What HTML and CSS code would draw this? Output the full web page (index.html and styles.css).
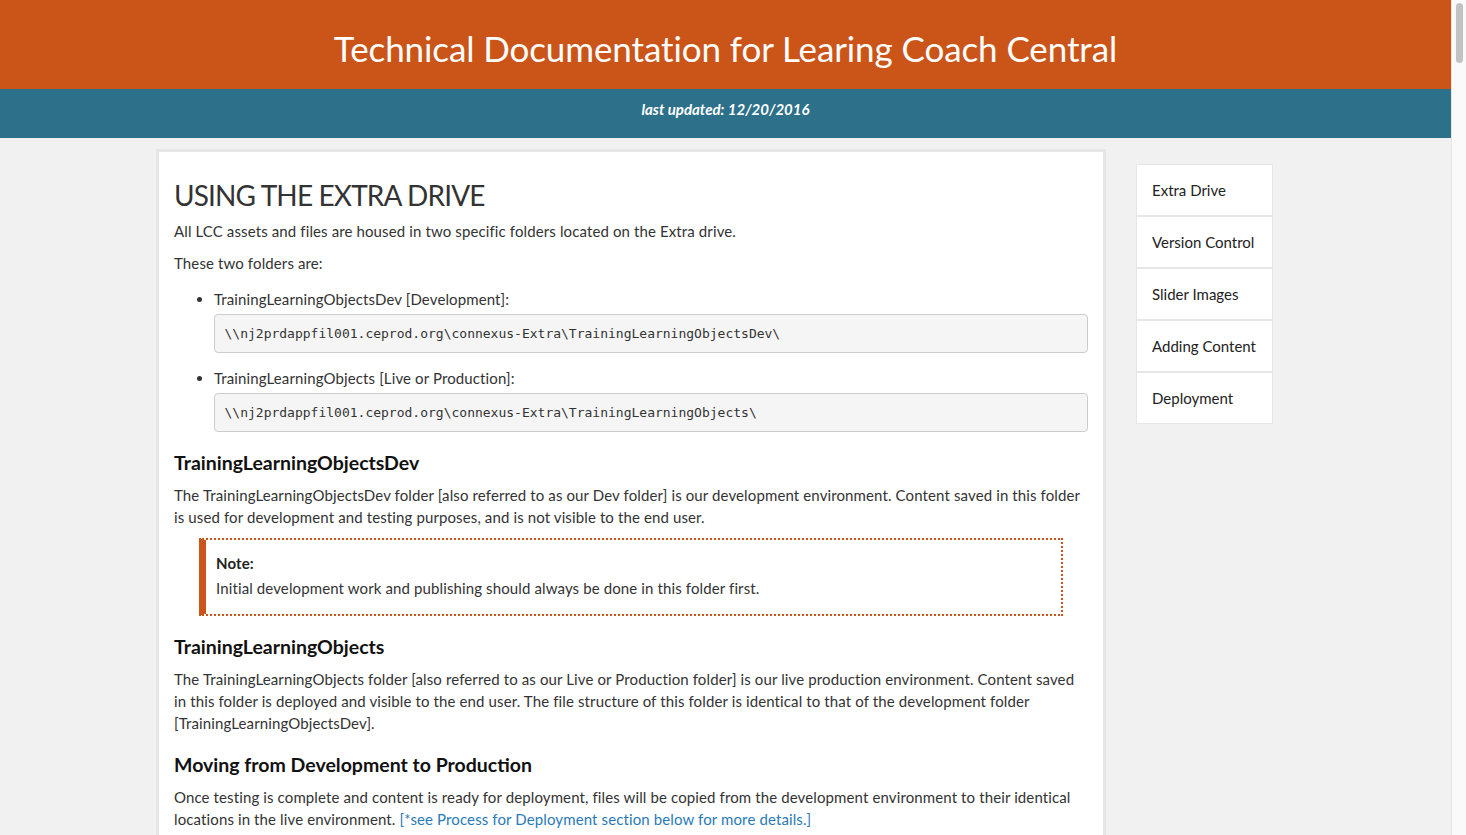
FILE: index.html
```html
<!DOCTYPE html>
<html lang="en">
<head>
<meta charset="utf-8">
<title>Technical Documentation for Learing Coach Central</title>
<link rel="stylesheet" href="styles.css">
</head>
<body>
<header class="site-header">
  <h1 class="site-title">Technical Documentation for Learing Coach Central</h1>
</header>
<div class="updated-bar">
  <p class="updated">last updated: 12/20/2016</p>
</div>
<div class="layout">
  <main class="card">
    <h1 class="section-title">USING THE EXTRA DRIVE</h1>
    <p>All LCC assets and files are housed in two specific folders located on the Extra drive.</p>
    <p>These two folders are:</p>
    <ul class="folders">
      <li>
        <div class="folder-label">TrainingLearningObjectsDev [Development]:</div>
        <pre class="path">\\nj2prdappfil001.ceprod.org\connexus-Extra\TrainingLearningObjectsDev\</pre>
      </li>
      <li>
        <div class="folder-label">TrainingLearningObjects [Live or Production]:</div>
        <pre class="path">\\nj2prdappfil001.ceprod.org\connexus-Extra\TrainingLearningObjects\</pre>
      </li>
    </ul>
    <h3>TrainingLearningObjectsDev</h3>
    <p>The TrainingLearningObjectsDev folder [also referred to as our Dev folder] is our development environment. Content saved in this folder is used for development and testing purposes, and is not visible to the end user.</p>
    <div class="note">
      <div class="note-title">Note:</div>
      <div class="note-text">Initial development work and publishing should always be done in this folder first.</div>
    </div>
    <h3>TrainingLearningObjects</h3>
    <p>The TrainingLearningObjects folder [also referred to as our Live or Production folder] is our live production environment. Content saved in this folder is deployed and visible to the end user. The file structure of this folder is identical to that of the development folder [TrainingLearningObjectsDev].</p>
    <h3>Moving from Development to Production</h3>
    <p>Once testing is complete and content is ready for deployment, files will be copied from the development environment to their identical locations in the live environment. <a class="ref" href="#deployment">[*see Process for Deployment section below for more details.]</a></p>
    <h3>Version Control</h3>
    <p>All LCC content is kept under version control so that changes can be tracked and reverted when necessary.</p>
    <p>Please make sure every change is committed with a short description of what was updated.</p>
  </main>
  <nav class="side-nav">
    <a class="nav-item" href="#extra">Extra Drive</a>
    <a class="nav-item" href="#version">Version Control</a>
    <a class="nav-item" href="#slider">Slider Images</a>
    <a class="nav-item" href="#adding">Adding Content</a>
    <a class="nav-item" href="#deployment">Deployment</a>
  </nav>
</div>
<div class="scrollbar" aria-hidden="true"><div class="scrollbar-thumb"></div></div>
</body>
</html>
```
FILE: styles.css
```css
html, body {
  margin: 0;
  padding: 0;
}
body {
  background: #f1f1f1;
  font-family: Lato, "Noto Sans", sans-serif;
  font-size: 15px;
  line-height: 22px;
  letter-spacing: 0.12px;
  color: #333;
  padding-right: 15px;
}
.scrollbar {
  position: fixed;
  top: 0;
  right: 0;
  bottom: 0;
  width: 14px;
  background: #fafafa;
  border-left: 1px solid #e6e6e6;
}
.scrollbar-thumb {
  margin: 3px 3px 0 4px;
  height: 60px;
  background: #c2c2c2;
  border-radius: 4px;
}
.site-header {
  background: #cb5519;
  height: 89px;
  box-sizing: border-box;
  padding-top: 6px;
  display: flex;
  align-items: center;
  justify-content: center;
}
.site-title {
  margin: 0;
  color: #fff;
  font-weight: 400;
  font-size: 35px;
  line-height: 40px;
  letter-spacing: -0.1px;
}
.updated-bar {
  background: #2c7089;
  height: 49px;
  box-sizing: border-box;
  padding-bottom: 10px;
  display: flex;
  align-items: center;
  justify-content: center;
}
.updated {
  margin: 0;
  color: #fff;
  font-style: italic;
  font-weight: 700;
  font-size: 15px;
  letter-spacing: 0;
}
.layout {
  display: flex;
  align-items: flex-start;
  padding-left: 156px;
  padding-top: 11px;
  gap: 30px;
}
.card {
  width: 914px;
  background: #fff;
  border: 3px solid #e6e6e6;
  padding: 0 15px 20px;
}
.section-title {
  margin: 25px 0 7px;
  font-size: 28px;
  line-height: 36px;
  font-weight: 400;
  letter-spacing: -0.85px;
  color: #333;
}
p {
  margin: 0 0 10px;
}
.folders {
  margin: 14px 0 0;
  padding-left: 40px;
}
.folder-label {
  margin-bottom: 4px;
}
.path {
  margin: 0 0 14px;
  padding: 9.5px;
  font-family: "DejaVu Sans Mono", monospace;
  font-size: 13px;
  line-height: 18px;
  letter-spacing: 0;
  color: #333;
  background: #f5f5f5;
  border: 1px solid #ccc;
  border-radius: 4px;
  white-space: pre;
}
h3 {
  margin: 20px 0 11px;
  font-size: 19.5px;
  line-height: 21px;
  font-weight: 700;
  letter-spacing: 0;
  color: #111;
}
.note {
  margin: 0 25px 20px;
  border: 2px dotted #cb5519;
  border-left: 7px solid #cb5519;
  padding: 12px 10px 15px;
}
.note-title {
  font-weight: 700;
  color: #222;
  margin-bottom: 3px;
}
.ref {
  color: #2a7ab8;
  text-decoration: none;
}
.side-nav {
  margin-top: 15px;
  width: 137px;
  display: flex;
  flex-direction: column;
}
.nav-item {
  display: block;
  background: #fff;
  border: 1px solid #e6e6e6;
  padding: 14px 15px;
  color: #222;
  text-decoration: none;
  font-size: 15px;
  line-height: 22px;
  letter-spacing: 0;
  white-space: nowrap;
}
```
